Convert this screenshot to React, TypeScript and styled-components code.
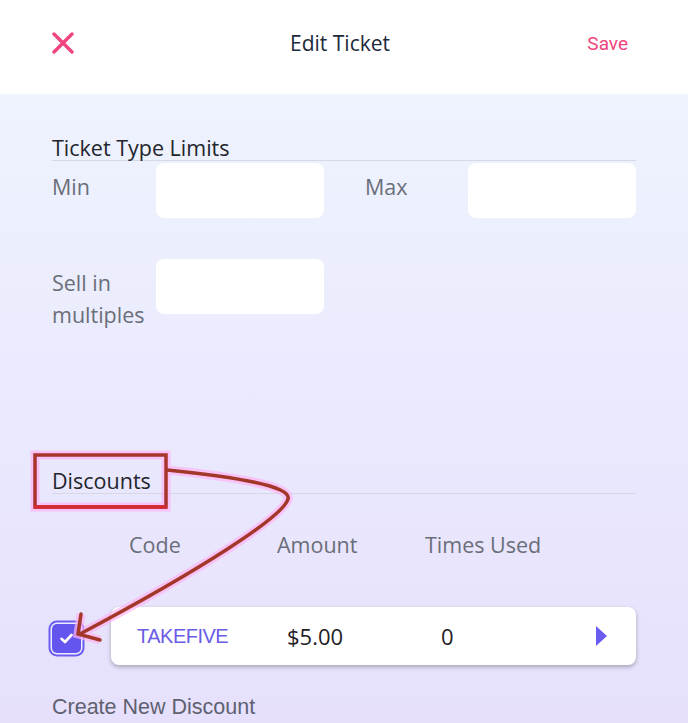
import styled, { createGlobalStyle } from "styled-components";

const GlobalStyle = createGlobalStyle`
  body {
    margin: 0;
    font-family: "Open Sans", "Noto Sans", sans-serif;
  }
`;

const Page = styled.div`
  position: relative;
  width: 688px;
  min-height: 723px;
  overflow: hidden;
  background: linear-gradient(180deg, #ffffff 0, #ffffff 94px, #eef3fe 94px, #e6e0fc 723px);
`;

const Header = styled.header`
  height: 94px;
  box-sizing: border-box;
  display: grid;
  grid-template-columns: 1fr auto 1fr;
  align-items: center;
  padding: 0 60px 8px 52px;
  background: #fff;
`;

const CloseButton = styled.button`
  justify-self: start;
  border: none;
  background: none;
  padding: 0;
  display: grid;
  cursor: pointer;
`;

const Title = styled.h1`
  margin: 0;
  font-size: 21px;
  font-weight: 400;
  color: #1c2a3b;
`;

const SaveButton = styled.button`
  justify-self: end;
  border: none;
  background: none;
  padding: 0;
  font-family: Roboto, "Liberation Sans", sans-serif;
  font-size: 19px;
  color: #f0457d;
  cursor: pointer;
`;

const Body = styled.main`
  padding: 42px 52px 20px;
`;

const SectionTitle = styled.h2<{ $gap?: number }>`
  margin: ${(p) => p.$gap ?? 0}px 0 0;
  font-size: 21.5px;
  font-weight: 400;
  line-height: 24px;
  color: #23252c;
  border-bottom: 1px solid #d6d8e4;
`;

const FieldGrid = styled.div`
  display: grid;
  grid-template-columns: 104px 168px 41px 103px 168px;
  row-gap: 41px;
  margin-top: 2px;
  align-items: start;
`;

const Label = styled.label<{ $col?: number }>`
  grid-column: ${(p) => p.$col ?? 1};
  padding-top: 8px;
  font-size: 21.5px;
  line-height: 32px;
  color: #6a6e79;
`;

const Input = styled.input<{ $col?: number }>`
  grid-column: ${(p) => p.$col ?? 2};
  box-sizing: border-box;
  width: 168px;
  height: 55px;
  border: none;
  border-radius: 8px;
  background: #fff;
  outline: none;
`;

const ColumnHeads = styled.div`
  display: grid;
  grid-template-columns: 148px 148px auto;
  padding-left: 77px;
  margin-top: 37px;
  font-size: 21.5px;
  line-height: 28px;
  color: #6a6e79;
`;

const DiscountRow = styled.div`
  display: flex;
  align-items: center;
  gap: 30px;
  margin-top: 48px;
`;

const Check = styled.span`
  flex: none;
  width: 29px;
  height: 29px;
  margin-top: 4px;
  border-radius: 5px;
  background: #6555ef;
  box-shadow: 0 0 0 1.5px #ecebfd, 0 0 0 3.5px #6b5cf0;
  display: grid;
  place-items: center;
`;

const Card = styled.div`
  flex: 1;
  height: 58px;
  box-sizing: border-box;
  display: grid;
  grid-template-columns: 150px 154px 1fr auto;
  align-items: center;
  padding: 0 29px 0 26px;
  background: #fff;
  border-radius: 8px;
  box-shadow: 0 2px 4px rgba(0, 0, 0, 0.28);
`;

const Cell = styled.span<{ $accent?: boolean }>`
  color: ${(p) => (p.$accent ? "#6a5ce6" : "#1f2026")};
  font-family: ${(p) => (p.$accent ? `"Liberation Sans", Arial, sans-serif` : `"Open Sans", sans-serif`)};
  font-size: ${(p) => (p.$accent ? 20 : 22)}px;
  letter-spacing: ${(p) => (p.$accent ? -0.5 : 0)}px;
`;

const Arrow = styled.span`
  width: 0;
  height: 0;
  border-top: 10.5px solid transparent;
  border-bottom: 10.5px solid transparent;
  border-left: 11px solid #6b5cf0;
`;

const CreateLink = styled.a`
  display: block;
  margin-top: 30px;
  font-family: "Liberation Sans", Arial, sans-serif;
  font-size: 21.5px;
  line-height: 24px;
  color: #5f6170;
  cursor: pointer;
`;

const Annotation = styled.svg`
  position: absolute;
  inset: 0;
  pointer-events: none;
`;

export default function App() {
  const curve = "M167,470 C235,477 292,486 288,499 C283,517 200,570 80,634";
  const head = "M81,614 L78,634 L100,640";

  return (
    <>
      <GlobalStyle />
      <Page>
        <Header>
          <CloseButton aria-label="Close">
            <svg width="22" height="22" viewBox="0 0 22 22">
              <path d="M2 2 L20 20 M20 2 L2 20" stroke="#f0457d" strokeWidth="3.4" strokeLinecap="round" />
            </svg>
          </CloseButton>
          <Title>Edit Ticket</Title>
          <SaveButton>Save</SaveButton>
        </Header>

        <Body>
          <SectionTitle>Ticket Type Limits</SectionTitle>
          <FieldGrid>
            <Label>Min</Label>
            <Input $col={2} />
            <Label $col={4}>Max</Label>
            <Input $col={5} />
            <Label>
              Sell in
              <br />
              multiples
            </Label>
            <Input $col={2} />
          </FieldGrid>

          <SectionTitle $gap={138}>Discounts</SectionTitle>
          <ColumnHeads>
            <span>Code</span>
            <span>Amount</span>
            <span>Times Used</span>
          </ColumnHeads>

          <DiscountRow>
            <Check>
              <svg width="13" height="11" viewBox="0 0 13 11">
                <path d="M1.5 5.8 L5 9 L11.5 2" fill="none" stroke="#fff" strokeWidth="2.6" strokeLinecap="round" strokeLinejoin="round" />
              </svg>
            </Check>
            <Card>
              <Cell $accent>TAKEFIVE</Cell>
              <Cell>$5.00</Cell>
              <Cell>0</Cell>
              <Arrow />
            </Card>
          </DiscountRow>

          <CreateLink>Create New Discount</CreateLink>
        </Body>

        <Annotation width="688" height="723" viewBox="0 0 688 723">
          <g fill="none" stroke="#ffb4f4" strokeWidth="9" opacity="0.7">
            <rect x="35" y="455" width="131" height="52" />
            <path d={curve} />
            <path d={head} />
          </g>
          <g fill="none" strokeWidth="3.5">
            <rect x="35" y="455" width="131" height="52" stroke="#a8352b" />
            <line x1="34" y1="507" x2="167" y2="507" stroke="#d52a33" />
            <path d={curve} stroke="#a3382a" />
            <path d={head} stroke="#a3382a" strokeLinecap="round" />
          </g>
        </Annotation>
      </Page>
    </>
  );
}
